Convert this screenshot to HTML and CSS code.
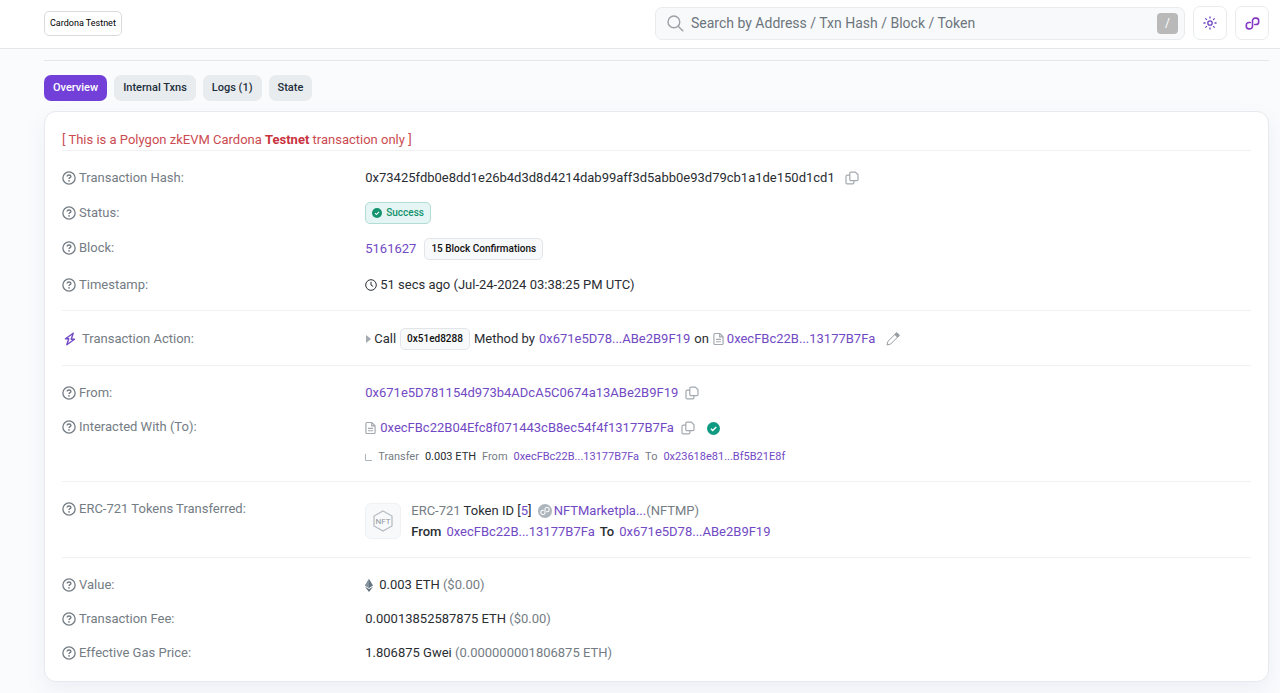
FILE: index.html
```html
<!DOCTYPE html>
<html lang="en">
<head>
<meta charset="utf-8">
<title>Transaction Details</title>
<link rel="stylesheet" href="styles.css">
</head>
<body>
<svg class="defs" aria-hidden="true">
  <symbol id="help" viewBox="0 0 16 16"><circle cx="8" cy="8" r="7" fill="none" stroke="currentColor" stroke-width="1.5"/><path d="M5.800 6.300c.1-1.200 1-1.800 2.200-1.800s2.200.7 2.200 1.700c0 1.300-2.200 1.400-2.200 2.800" fill="none" stroke="currentColor" stroke-width="1.600"/><circle cx="8" cy="11.200" r="1" fill="currentColor"/></symbol>
  <symbol id="copy" viewBox="0 0 14 14"><path d="M6 1.100h4.300L13 3.800v4.700a1.200 1.200 0 0 1-1.200 1.200H6a1.200 1.200 0 0 1-1.200-1.200V2.300A1.200 1.200 0 0 1 6 1.100zM4.800 4.200H2.200A1.200 1.200 0 0 0 1 5.400v6.300a1.200 1.200 0 0 0 1.200 1.200h5.500a1.200 1.200 0 0 0 1.200-1.200v-2" fill="none" stroke="currentColor" stroke-width="1.200"/></symbol>
  <symbol id="file" viewBox="0 0 12 14"><path d="M2 1h5.500L11 4.500V12a1 1 0 0 1-1 1H2a1 1 0 0 1-1-1V2a1 1 0 0 1 1-1zM7.300 1v3.700H11M3.300 7.500h5.400M3.300 10h5.400" fill="none" stroke="currentColor" stroke-width="1.300"/></symbol>
  <symbol id="check" viewBox="0 0 14 14"><circle cx="7" cy="7" r="7" fill="currentColor"/><path d="M4.200 7.200l2 2 3.700-3.900" fill="none" stroke="#fff" stroke-width="1.500"/></symbol>
  <symbol id="loop" viewBox="0 0 16 16"><path d="M8 10.200V5.300A2.800 2.800 0 0 1 10.800 2.300h1a2.800 2.800 0 0 1 2.800 2.800v1.200a2.800 2.800 0 0 1-2.800 2.800H10.400M8 5.800v4.900a2.800 2.800 0 0 1-2.800 3H4.200a2.800 2.800 0 0 1-2.800-2.800V9.700a2.800 2.800 0 0 1 2.800-2.800H5.600" fill="none" stroke="currentColor" stroke-width="1.700" stroke-linecap="round"/></symbol>
</svg>

<header class="topbar">
  <span class="network">Cardona Testnet</span>
  <form class="search">
    <svg class="search-icon" viewBox="0 0 18 18"><circle cx="7.300" cy="7.300" r="6.200"/><path d="M11.800 11.800l5.400 5.400"/></svg>
    <input type="search" aria-label="Search" placeholder="Search by Address / Txn Hash / Block / Token">
    <kbd>/</kbd>
  </form>
  <button class="square" type="button" aria-label="Theme">
    <svg viewBox="0 0 16 16" width="14" height="14"><g fill="none" stroke="currentColor" stroke-width="1.500"><circle cx="8" cy="8" r="2.500"/><path d="M8 .5v2.400M8 13.100v2.400M.5 8h2.400M13.100 8h2.400M2.700 2.700l1.700 1.700M11.600 11.600l1.700 1.700M2.700 13.300l1.700-1.700M11.600 4.400l1.700-1.700"/></g></svg>
  </button>
  <button class="square chain" type="button" aria-label="Networks"><svg width="15" height="15"><use href="#loop"/></svg></button>
</header>

<main class="page">
  <nav class="tabs">
    <button class="tab active" type="button">Overview</button>
    <button class="tab" type="button">Internal Txns</button>
    <button class="tab" type="button">Logs (1)</button>
    <button class="tab" type="button">State</button>
  </nav>

  <div class="card">
    <p class="notice">[ This is a Polygon zkEVM Cardona <strong>Testnet</strong> transaction only ]</p>

    <dl class="group">
      <dt><svg class="help"><use href="#help"/></svg>Transaction Hash:</dt>
      <dd><span>0x73425fdb0e8dd1e26b4d3d8d4214dab99aff3d5abb0e93d79cb1a1de150d1cd1</span><button class="copy wide" type="button" aria-label="Copy hash"><svg><use href="#copy"/></svg></button></dd>
      <dt><svg class="help"><use href="#help"/></svg>Status:</dt>
      <dd><span class="badge success"><svg class="tick"><use href="#check"/></svg>Success</span></dd>
      <dt><svg class="help"><use href="#help"/></svg>Block:</dt>
      <dd class="tall"><a href="#">5161627</a><span class="badge confirmations">15 Block Confirmations</span></dd>
      <dt><svg class="help"><use href="#help"/></svg>Timestamp:</dt>
      <dd><svg class="clock" viewBox="0 0 12 12"><circle cx="6" cy="6" r="5.300"/><path d="M6 2.800V6l2.200 1.400"/></svg><span>51 secs ago (Jul-24-2024 03:38:25 PM UTC)</span></dd>
    </dl>

    <dl class="group">
      <dt class="action"><svg class="bolt" viewBox="0 0 12 14"><path d="M9.200 1.200L1.500 6.800h3.300L2.800 12.800l7.700-5.600H7.200z"/></svg>Transaction Action:</dt>
      <dd class="tall spaced"><span class="call"><svg class="caret" viewBox="0 0 5 8"><path d="M0 0l5 4-5 4z"/></svg>Call</span><span class="badge">0x51ed8288</span><span>Method by</span><a href="#">0x671e5D78...ABe2B9F19</a><span>on</span><span class="contract"><svg class="file"><use href="#file"/></svg><a href="#">0xecFBc22B...13177B7Fa</a></span><button class="edit" type="button" aria-label="Add note"><svg viewBox="0 0 14 14"><path d="M1 13l.9-3.600L10 1.300a1 1 0 0 1 1.400 0l1.300 1.300a1 1 0 0 1 0 1.400L4.600 12.100z"/><path class="solid" d="M8.800 2.500L10 1.300a1 1 0 0 1 1.400 0l1.300 1.300a1 1 0 0 1 0 1.400l-1.200 1.200z"/></svg></button></dd>
    </dl>

    <dl class="group compact">
      <dt><svg class="help"><use href="#help"/></svg>From:</dt>
      <dd><a href="#">0x671e5D781154d973b4ADcA5C0674a13ABe2B9F19</a><button class="copy" type="button" aria-label="Copy sender"><svg><use href="#copy"/></svg></button></dd>
      <dt><svg class="help"><use href="#help"/></svg>Interacted With (To):</dt>
      <dd class="stack">
        <div class="line"><svg class="file"><use href="#file"/></svg><a href="#">0xecFBc22B04Efc8f071443cB8ec54f4f13177B7Fa</a><button class="copy" type="button" aria-label="Copy contract"><svg><use href="#copy"/></svg></button><svg class="verified"><use href="#check"/></svg></div>
        <div class="line transfer"><svg class="elbow" viewBox="0 0 7 7"><path d="M.5 0v6.500H7"/></svg><span>Transfer</span><span class="strong">0.003 ETH</span><span>From</span><a href="#">0xecFBc22B...13177B7Fa</a><span>To</span><a href="#">0x23618e81...Bf5B21E8f</a></div>
      </dd>
    </dl>

    <dl class="group">
      <dt><svg class="help"><use href="#help"/></svg>ERC-721 Tokens Transferred:</dt>
      <dd class="token">
        <span class="thumb"><svg viewBox="0 0 22 22"><path d="M11 1l9 5v10l-9 5-9-5V6z" fill="none" stroke="currentColor" stroke-width="1.200"/><text x="11" y="14" text-anchor="middle">NFT</text></svg></span>
        <div>
          <div class="token-line"><span class="muted">ERC-721</span> Token ID [<a href="#">5</a>] <svg class="coin" viewBox="0 0 14 14"><circle cx="7" cy="7" r="7" fill="#adb5bd"/><use href="#loop" x="2" y="2" width="10" height="10" color="#fff"/></svg><a href="#">NFTMarketpla...</a><span class="muted">(NFTMP)</span></div>
          <div class="token-line parties"><b>From</b><a href="#">0xecFBc22B...13177B7Fa</a><b>To</b><a href="#">0x671e5D78...ABe2B9F19</a></div>
        </div>
      </dd>
    </dl>

    <dl class="group compact">
      <dt><svg class="help"><use href="#help"/></svg>Value:</dt>
      <dd><svg class="eth" viewBox="0 0 8 13"><path d="M4 0l4 6.600-4 2.400-4-2.400z" fill="#62727f"/><path d="M0 7.700l4 2.400 4-2.400L4 13z" fill="#62727f"/><path d="M4 0v9L0 6.600z" fill="#8794a0"/></svg><span>0.003 ETH <span class="muted">($0.00)</span></span></dd>
      <dt><svg class="help"><use href="#help"/></svg>Transaction Fee:</dt>
      <dd><span>0.00013852587875 ETH <span class="muted">($0.00)</span></span></dd>
      <dt><svg class="help"><use href="#help"/></svg>Effective Gas Price:</dt>
      <dd><span>1.806875 Gwei <span class="muted">(0.000000001806875 ETH)</span></span></dd>
    </dl>
  </div>
</main>
</body>
</html>
```
FILE: styles.css
```css
* { box-sizing: border-box; }
body {
  margin: 0;
  background: #fafbfd;
  color: #292d32;
  font-family: Roboto, "Liberation Sans", sans-serif;
  font-size: 13px;
  line-height: 22px;
}
svg { flex: none; }
button, input { font: inherit; }
button { cursor: pointer; }
a { color: #7249c4; text-decoration: none; }
.defs { display: none; }
.muted { color: #747c84; }

.topbar {
  display: flex;
  align-items: center;
  gap: 8px;
  min-height: 49px;
  padding: 0 11px 2px 44px;
  background: #fff;
  border-bottom: 1px solid #e3e7eb;
}
.network {
  margin-right: auto;
  padding: 0 5px;
  border: 1px solid #d9dcdf;
  border-radius: 5px;
  color: #000;
  font-size: 9px;
  line-height: 23px;
}
.search {
  display: flex;
  align-items: center;
  gap: 7px;
  flex: 0 1 530px;
  height: 33px;
  padding: 0 6px 0 11px;
  background: #f8f9fa;
  border: 1px solid #e9ecef;
  border-radius: 7px;
}
.search-icon { width: 17px; height: 17px; fill: none; stroke: #9ba1a7; stroke-width: 1.5; }
.search input {
  flex: 1;
  min-width: 0;
  padding: 0;
  border: 0;
  outline: 0;
  background: none;
  font-size: 14px;
}
.search input::placeholder { color: #6c757d; opacity: 1; }
kbd {
  width: 21px;
  border-radius: 4px;
  background: #b9b9ba;
  color: #fff;
  font: 12px/21px Roboto, sans-serif;
  text-align: center;
}
.square {
  display: grid;
  place-items: center;
  width: 34px;
  height: 34px;
  padding: 0;
  background: #fff;
  border: 1px solid #e9ecef;
  border-radius: 7px;
  color: #6f45c4;
}
.chain { color: #8436c4; }

.page { padding: 11px 11px 11px 44px; }
.tabs {
  display: flex;
  gap: 7px;
  padding: 14px 0 10px;
  border-top: 1px solid #e3e7eb;
}
.tab {
  height: 26px;
  padding: 0 9px;
  border: 0;
  border-radius: 7px;
  background: #e9ecef;
  color: #1d2f3c;
  font-size: 11px;
  font-weight: 500;
}
.tab.active { background: #733fd9; color: #fff; }

.card {
  padding: 17px 17px 3px;
  background: #fff;
  border: 1px solid #e6e9ef;
  border-radius: 12px;
  box-shadow: 0 8px 20px rgba(120, 125, 170, .09);
}
.notice { margin: 0; color: #cb4b51; line-height: 21px; }
.notice strong { color: #c93340; }
.group {
  display: grid;
  grid-template-columns: 1fr 3fr;
  gap: 13px 8px;
  margin: 0;
  padding: 16px 0 14px;
  border-top: 1px solid #eff1f3;
}
.group.compact { row-gap: 12px; }
dt { display: flex; align-items: center; align-self: start; gap: 3px; color: #747c84; }
dt.action { align-self: center; gap: 6px; padding-left: 2px; }
dd { display: flex; align-items: center; min-width: 0; margin: 0; white-space: nowrap; }
dd.tall { min-height: 24px; }
dd.spaced { gap: 4px; }
.help { width: 14px; height: 14px; }
.bolt { width: 12px; height: 14px; fill: none; stroke: #7249c4; stroke-width: 1.4; stroke-linejoin: round; }
.badge {
  padding: 0 6px;
  background: #f8f9fa;
  border: 1px solid #e3e6e9;
  border-radius: 5px;
  color: #111;
  font-size: 10px;
  font-weight: 500;
  line-height: 20px;
}
.confirmations { margin-left: 8px; }
.success {
  display: flex;
  align-items: center;
  gap: 4px;
  background: #e5f5f3;
  border-color: #b2dcd6;
  color: #14936f;
}
.tick { width: 10px; height: 10px; color: #14936f; }
.clock { width: 12px; height: 12px; margin-right: 3px; fill: none; stroke: #292d32; }
.copy, .edit { display: flex; margin-left: 7px; padding: 0; border: 0; background: none; color: #a3a9af; }
.copy.wide { margin-left: 10px; }
.copy svg { width: 14px; height: 14px; }
.edit svg { width: 14px; height: 14px; fill: none; stroke: #989ea4; }
.edit .solid { fill: #989ea4; }
.call, .contract { display: flex; align-items: center; gap: 3px; }
.caret { width: 5px; height: 8px; margin-left: 1px; fill: #a3a9af; }
.file { width: 11px; height: 14px; color: #a3a9af; }
.stack { display: grid; gap: 8px; padding-top: 1px; }
.line { display: flex; align-items: center; gap: 4px; }
.line .copy { margin-left: 3px; }
.verified { width: 13px; height: 13px; margin-left: 8px; color: #0f9b82; }
.transfer { gap: 6px; color: #747c84; font-size: 11px; line-height: 20px; }
.transfer .strong { color: #292d32; }
.elbow { width: 7px; height: 7px; fill: none; stroke: #adb5bd; }
.token { gap: 10px; padding: 2px 0 1px; }
.token-line { line-height: 21px; }
.parties { display: flex; gap: 5px; }
.token b { font-weight: 500; }
.thumb {
  display: grid;
  place-items: center;
  width: 36px;
  height: 36px;
  background: #f8f9fa;
  border: 1px solid #eff1f4;
  border-radius: 6px;
  color: #b3bac1;
}
.thumb svg { width: 22px; height: 22px; }
.thumb text { fill: #9098a1; font-size: 8px; }
.coin { width: 14px; height: 14px; margin: 0 2px 0 3px; vertical-align: -3px; }
.eth { width: 8px; height: 13px; margin-right: 6px; }
```
